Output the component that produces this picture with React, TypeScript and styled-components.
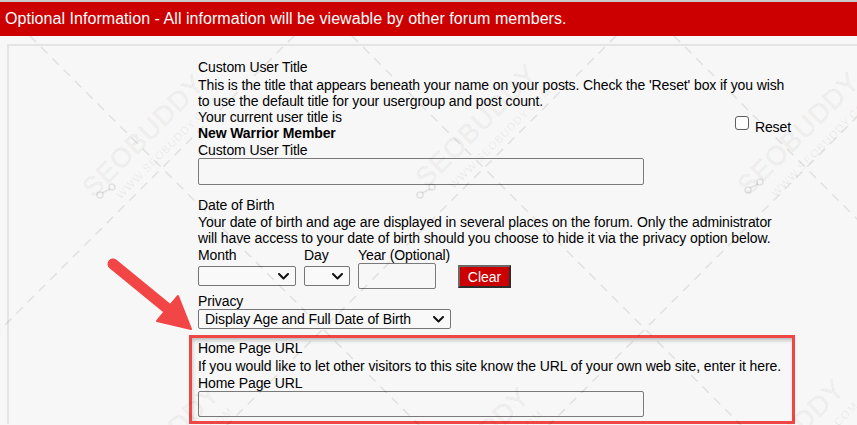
import React from 'react';
import styled, { createGlobalStyle } from 'styled-components';

const GlobalStyle = createGlobalStyle`
  html, body { margin: 0; padding: 0; background: #f7f7f7; }
  body {
    font-family: "Liberation Sans", Arial, sans-serif;
    font-size: 14px;
    color: #000;
    overflow: hidden;
  }
  * { box-sizing: border-box; }
`;

const Page = styled.div`
  position: relative;
  width: 857px;
  height: 425px;
  overflow: hidden;
  background: #f7f7f7;
  letter-spacing: -0.1px;
`;

const Header = styled.div`
  border-top: 2px solid #c9c9c9;
  background: #cc0000;
  color: #fff;
  height: 36px;
  line-height: 34px;
  padding-left: 5px;
  font-size: 16px;
  letter-spacing: 0.05px;
`;

const Panel = styled.div`
  margin: 8px 0 0 7px;
  border-top: 2px solid #e4e4e4;
  border-left: 2px solid #e4e4e4;
  padding: 13px 0 0 189px;
`;

const Column = styled.div`
  width: 596px;
`;

const Section = styled.div<{ $gap?: number }>`
  margin-top: ${(p) => p.$gap ?? 0}px;
`;

const Title = styled.div<{ $mt?: number }>`
  line-height: 16px;
  margin-top: ${(p) => p.$mt ?? 0}px;
`;

const Desc = styled.div<{ $mt?: number }>`
  line-height: 16px;
  margin-top: ${(p) => p.$mt ?? 0}px;
`;

const CurrentRow = styled.div`
  display: flex;
  align-items: center;
  justify-content: space-between;
`;

const CurrentText = styled.div`
  line-height: 16px;
`;

const Strong = styled.div`
  font-weight: bold;
  line-height: 16px;
`;

const CheckLabel = styled.label`
  display: flex;
  align-items: center;
  gap: 6px;
  padding-top: 3px;
  margin-right: 3px;
`;

const CheckBox = styled.span`
  width: 14px;
  height: 14px;
  border: 1px solid #5f5f5f;
  border-radius: 3px;
  background: #fdfdfd;
  margin-top: -7px;
`;

const TextInput = styled.div<{ $h?: number; $w?: number }>`
  width: ${(p) => p.$w ?? 446}px;
  height: ${(p) => p.$h ?? 27}px;
  border: 1px solid #7a7a7a;
  border-radius: 2px;
  background: transparent;
`;

const DateGrid = styled.div`
  display: grid;
  grid-template-columns: 106px 54px 100px auto;
  grid-template-rows: 16px auto;
  align-items: center;
  justify-items: start;
  margin-top: 1px;
`;

const SmallLabel = styled.div`
  line-height: 16px;
  align-self: start;
`;

const SelectBox = styled.div<{ $w: number; $h?: number }>`
  position: relative;
  width: ${(p) => p.$w}px;
  height: ${(p) => p.$h ?? 20}px;
  border: 1px solid #767676;
  border-radius: 2px;
  background: #f9f9f9;
  line-height: ${(p) => (p.$h ?? 20) - 2}px;
  padding-left: 6px;
  white-space: nowrap;
`;

const Chevron = styled.svg`
  position: absolute;
  right: 6px;
  top: 50%;
  margin-top: -3px;
`;

const ClearButton = styled.button`
  width: 53px;
  height: 23px;
  background: #cc0000;
  color: #fff;
  font-family: "Liberation Sans", Arial, sans-serif;
  font-size: 14px;
  padding: 0;
  border: 2px solid;
  border-color: #6a6a6a #2d2d2d #2d2d2d #6a6a6a;
  margin-top: 1px;
`;

const Highlight = styled.div`
  margin: 6px 0 0 -9px;
  width: 606px;
  height: 89px;
  border: 3px solid #f04646;
  padding: 2px 0 0 6px;
  box-shadow: inset 1px 3px 4px -1px rgba(0, 0, 0, 0.28);
`;

const Overlay = styled.svg`
  position: absolute;
  left: 0;
  top: 36px;
  pointer-events: none;
`;

const ArrowLayer = styled.svg`
  position: absolute;
  left: 0;
  top: 0;
  pointer-events: none;
`;

const ChevronIcon = () => (
  <Chevron width="11" height="7" viewBox="0 0 11 7">
    <path d="M1 1 L5.5 5.5 L10 1" fill="none" stroke="#111" strokeWidth="2" strokeLinecap="round" strokeLinejoin="round" />
  </Chevron>
);

const marks = [
  { x: 150, y: 142 },
  { x: 483, y: 132 },
  { x: 805, y: 140 },
  { x: 165, y: 452 },
  { x: 475, y: 455 },
  { x: 790, y: 447 },
];

const nodes = [
  { x: 100, y: 195 },
  { x: 420, y: 195 },
  { x: 748, y: 190 },
];

const Watermark = () => {
  const dr = [-6, 316, 638, 960];
  const dl = [8, 330, 652, 974, 1296];
  return (
    <Overlay width="857" height="389" viewBox="0 36 857 389">
      <g stroke="rgba(0,0,0,0.09)" strokeWidth="1.5" strokeDasharray="9 7">
        {dr.map((c) => (
          <line key={'r' + c} x1={c - 100} y1={-100} x2={c + 600} y2={600} />
        ))}
        {dl.map((c) => (
          <line key={'l' + c} x1={c + 100} y1={-100} x2={c - 600} y2={600} />
        ))}
      </g>
      {marks.map((m, i) => (
        <g key={i} transform={`translate(${m.x} ${m.y}) rotate(-45)`}>
          <text
            x="0"
            y="0"
            textAnchor="middle"
            fontFamily="Liberation Sans, Arial, sans-serif"
            fontSize="27"
            letterSpacing="1"
            fill="rgba(0,0,0,0.045)"
            stroke="rgba(0,0,0,0.05)"
            strokeWidth="0.8"
          >
            SEOBUDDY
          </text>
          <text
            x="8"
            y="20"
            textAnchor="middle"
            fontFamily="Liberation Sans, Arial, sans-serif"
            fontSize="11"
            letterSpacing="1"
            fill="rgba(0,0,0,0.07)"
          >
            WWW.SEOBUDDY.COM
          </text>
        </g>
      ))}
      {nodes.map((n, i) => (
        <g key={i} fill="none" stroke="rgba(0,0,0,0.09)" strokeWidth="1.5">
          <circle cx={n.x} cy={n.y} r="3" />
          <circle cx={n.x + 12} cy={n.y - 8} r="3" />
          <line x1={n.x + 2} y1={n.y - 2} x2={n.x + 10} y2={n.y - 6} />
        </g>
      ))}
    </Overlay>
  );
};

const Arrow = () => (
  <ArrowLayer width="857" height="425" viewBox="0 0 857 425">
    <line x1="113" y1="264" x2="168" y2="309" stroke="#f24545" strokeWidth="11" strokeLinecap="round" />
    <polygon points="191,329 157,321 178,296" fill="#f24545" stroke="#f24545" strokeWidth="2" strokeLinejoin="round" />
  </ArrowLayer>
);

export default function App() {
  return (
    <Page>
      <GlobalStyle />
      <Header>Optional Information - All information will be viewable by other forum members.</Header>
      <Panel>
        <Column>
          <Section>
            <Title>Custom User Title</Title>
            <Desc $mt={2}>
              This is the title that appears beneath your name on your posts. Check the 'Reset' box if you wish to use the default title for your usergroup and post count.
            </Desc>
            <CurrentRow>
              <div>
                <CurrentText>Your current user title is</CurrentText>
                <Strong>New Warrior Member</Strong>
              </div>
              <CheckLabel>
                <CheckBox />
                Reset
              </CheckLabel>
            </CurrentRow>
            <Title $mt={1}>Custom User Title</Title>
            <TextInput />
          </Section>

          <Section $gap={12}>
            <Title>Date of Birth</Title>
            <Desc $mt={1}>
              Your date of birth and age are displayed in several places on the forum. Only the administrator will have access to your date of birth should you choose to hide it via the privacy option below.
            </Desc>
            <DateGrid>
              <SmallLabel>Month</SmallLabel>
              <SmallLabel>Day</SmallLabel>
              <SmallLabel>Year (Optional)</SmallLabel>
              <span />
              <SelectBox $w={98}>
                <ChevronIcon />
              </SelectBox>
              <SelectBox $w={46}>
                <ChevronIcon />
              </SelectBox>
              <TextInput $w={78} $h={26} />
              <ClearButton>Clear</ClearButton>
            </DateGrid>
            <Title $mt={4}>Privacy</Title>
            <SelectBox $w={253}>
              Display Age and Full Date of Birth
              <ChevronIcon />
            </SelectBox>
          </Section>

          <Highlight>
            <Title>Home Page URL</Title>
            <Desc $mt={2}>
              If you would like to let other visitors to this site know the URL of your own web site, enter it here.
            </Desc>
            <Title $mt={1}>Home Page URL</Title>
            <TextInput $h={26} />
          </Highlight>
        </Column>
      </Panel>
      <Watermark />
      <Arrow />
    </Page>
  );
}
